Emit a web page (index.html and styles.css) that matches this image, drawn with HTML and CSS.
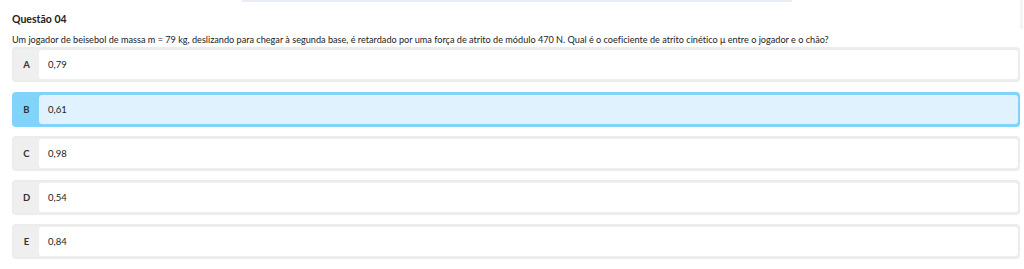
FILE: index.html
```html
<!DOCTYPE html>
<html lang="pt">
	<head>
		<meta charset="UTF-8" />
		<meta name="viewport" content="width=device-width, initial-scale=1.0" />
		<title>Questão 04</title>
		<link rel="stylesheet" href="styles.css">
	</head>
	<body>
		<div class="top">
			<div class="top-bar"></div>
			<div class="top-edge"></div>
		</div>
		<div class="question">
			<h2 class="title">Questão 04</h2>
			<p class="statement">Um jogador de beisebol de massa m = 79 kg, deslizando para chegar à segunda base, é retardado por uma força de atrito de módulo 470 N. Qual é o coeficiente de atrito cinético μ entre o jogador e o chão?</p>
			<div class="options">
				<div class="option">
					<div class="letter">A</div>
					<div class="answer">0,79</div>
				</div>
				<div class="option selected">
					<div class="letter">B</div>
					<div class="answer">0,61</div>
				</div>
				<div class="option">
					<div class="letter">C</div>
					<div class="answer">0,98</div>
				</div>
				<div class="option">
					<div class="letter">D</div>
					<div class="answer">0,54</div>
				</div>
				<div class="option">
					<div class="letter">E</div>
					<div class="answer">0,84</div>
				</div>
			</div>
		</div>
	</body>
</html>
```

FILE: styles.css
```css
body {
	margin: 0;
	background-color: #fff;
	font-family: Lato, "Open Sans", sans-serif;
	font-variant-ligatures: none;
	color: #222;
}

.top {
	display: flex;
	height: 0;
	overflow: visible;
}

.top-bar {
	margin-left: 242px;
	width: 550px;
	height: 2px;
	background-color: #e9eef4;
}

.top-edge {
	margin-left: auto;
	margin-right: 1px;
	width: 3px;
	height: 29px;
	background-color: #f3f3f3;
	border-radius: 0 0 2px 2px;
}

.question {
	padding: 12px 4px 0 12px;
}

.title {
	margin: 0;
	font-size: 10.5px;
	font-weight: bold;
	line-height: 14px;
	color: #222;
}

.statement {
	margin: 7px 0 0;
	font-size: 9.15px;
	line-height: 14px;
	color: #222;
}

.options {
	display: flex;
	flex-direction: column;
	gap: 9.25px;
	margin-top: 0.25px;
}

.option {
	display: flex;
	height: 35px;
	box-sizing: border-box;
	border: 2px solid #ececec;
	border-radius: 4px;
	background-color: #efefef;
}

.letter {
	width: 25px;
	display: flex;
	align-items: center;
	justify-content: center;
	font-size: 9.5px;
	font-weight: bold;
	color: #333;
}

.answer {
	flex: 1;
	display: flex;
	align-items: center;
	padding-left: 9px;
	margin: 1px 0;
	background-color: #fff;
	border-radius: 3px;
	font-size: 9.5px;
	color: #222;
}

.option.selected {
	border-color: #82d3fa;
	background-color: #82d3fa;
}

.option.selected .answer {
	background-color: #e0f2fd;
}
```
